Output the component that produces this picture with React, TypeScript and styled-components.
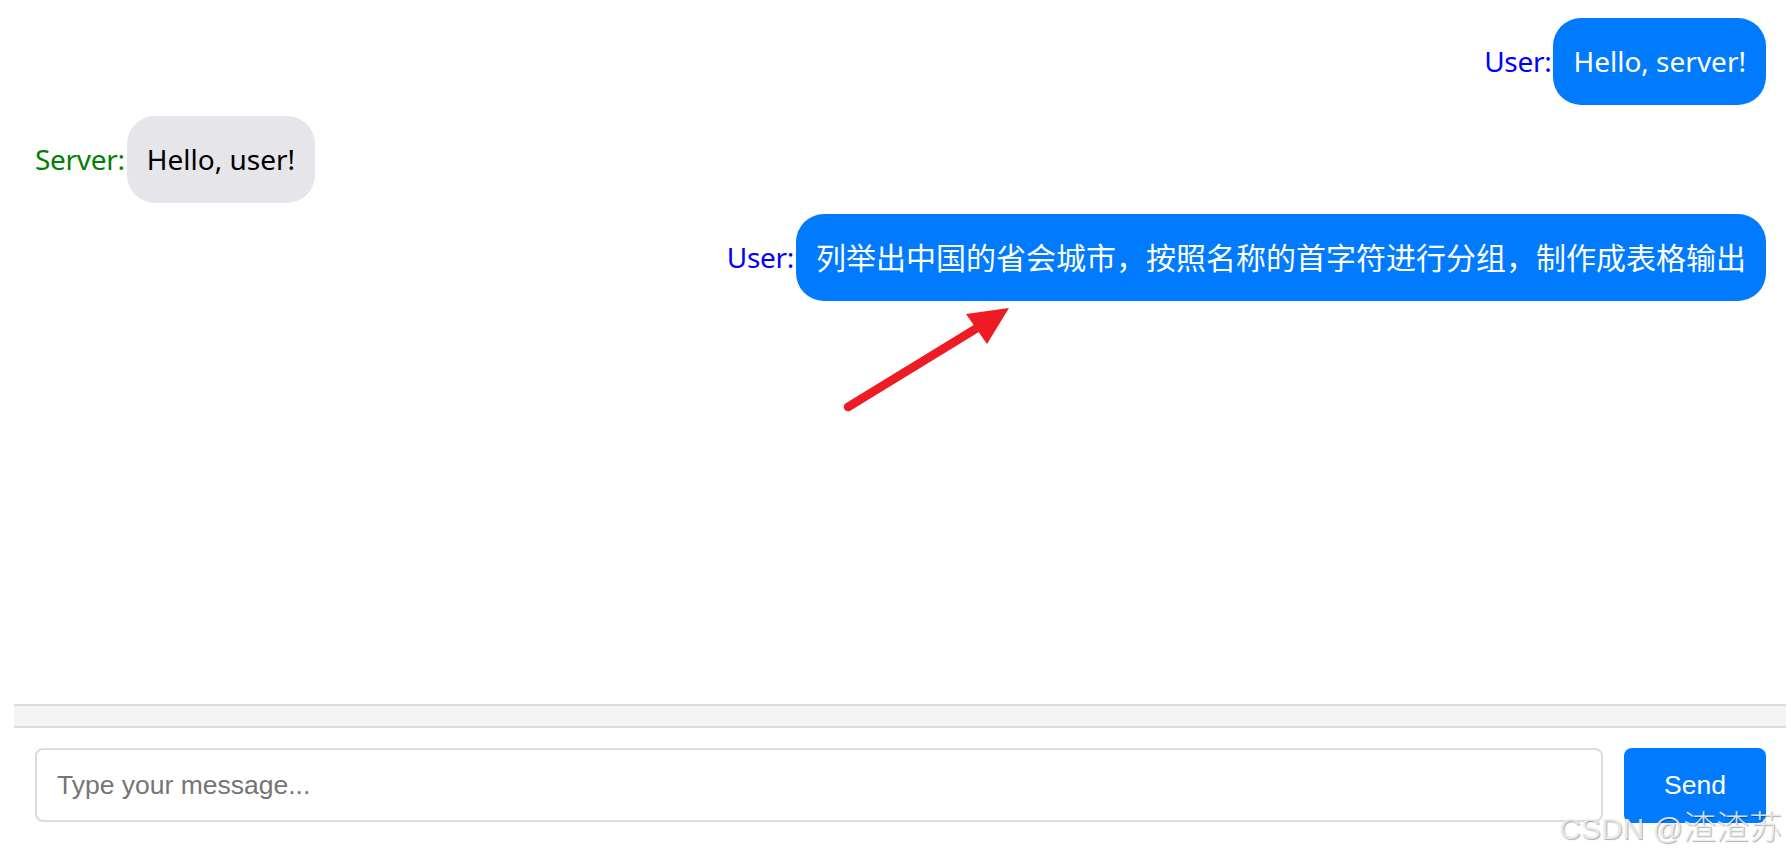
import * as React from "react";
import styled, {createGlobalStyle} from "styled-components";

interface IMessage {
    id: number,
    sender: "user" | "server",
    lang: string,
    text: string
}

const messages: Array<IMessage> = [
    {id: 1, sender: "user", lang: "en", text: "Hello, server!"},
    {id: 2, sender: "server", lang: "en", text: "Hello, user!"},
    {id: 3, sender: "user", lang: "zh", text: "列举出中国的省会城市，按照名称的首字符进行分组，制作成表格输出"},
];

const GlobalStyle = createGlobalStyle`
    html, body {
        margin: 0;
        padding: 0;
        background: #ffffff;
    }

    body {
        font-family: "Noto Sans", "Noto Sans CJK SC", sans-serif;
    }
`;

const Page = styled.div`
    position: relative;
    height: 860px;
    padding: 0 5px 0 14px;
    box-sizing: border-box;
    display: flex;
    flex-direction: column;
    overflow: hidden;
`;

const MessageList = styled.div`
    flex: none;
    height: 704px;
    box-sizing: border-box;
    padding: 18px 20px 0 21px;
    display: flex;
    flex-direction: column;
    gap: 11px;
`;

const Row = styled.div<{ $mine: boolean }>`
    display: flex;
    align-items: center;
    justify-content: ${props => props.$mine ? "flex-end" : "flex-start"};
`;

const Label = styled.span<{ $mine: boolean }>`
    font-size: 28px;
    line-height: 39px;
    margin-right: 2px;
    letter-spacing: -0.3px;
    color: ${props => props.$mine ? "#0000ff" : "#008000"};
`;

const Bubble = styled.div<{ $mine: boolean }>`
    padding: 24px 20px;
    font-size: 28px;
    line-height: 39px;
    border-radius: 28px;
    white-space: nowrap;
    background: ${props => props.$mine ? "#007bff" : "#e5e5ea"};
    color: ${props => props.$mine ? "#ffffff" : "#000000"};

    /* han glyphs run a touch larger than the latin ones */
    &:lang(zh) {
        font-size: 30px;
    }
`;

const Divider = styled.div`
    flex: none;
    height: 24px;
    box-sizing: border-box;
    border-top: 2px solid #dcdcdc;
    border-bottom: 2px solid #dcdcdc;
    background: #f4f4f4;
`;

const Composer = styled.div`
    display: flex;
    gap: 21px;
    padding: 20px 20px 0 21px;
`;

const MessageInput = styled.input`
    flex: 1;
    height: 74px;
    box-sizing: border-box;
    padding: 0 20px;
    border: 2px solid #dcdcdc;
    border-radius: 8px;
    font-family: "Liberation Sans", Arial, sans-serif;
    font-size: 26.5px;
    color: #222222;
    outline: none;

    &::placeholder {
        color: #757575;
    }
`;

const SendButton = styled.button`
    width: 142px;
    height: 75px;
    border: none;
    border-radius: 8px;
    background: #007bff;
    color: #ffffff;
    font-family: "Liberation Sans", Arial, sans-serif;
    font-size: 26.5px;
    cursor: pointer;
`;

const Watermark = styled.div`
    position: absolute;
    right: 9px;
    bottom: 14px;
    font-family: "Liberation Sans", "Noto Sans CJK SC", sans-serif;
    font-size: 30px;
    line-height: 34px;
    color: rgba(236, 236, 236, 0.92);
    text-shadow: 1px 1px 1px rgba(0, 0, 0, 0.32);
    pointer-events: none;

    span {
        font-size: 33px;
        font-weight: 300;
    }
`;

const Pointer = styled.svg`
    position: absolute;
    left: 830px;
    top: 295px;
    width: 190px;
    height: 125px;
    pointer-events: none;
`;

function MessageRow(props: { message: IMessage }) {
    const mine = props.message.sender === "user";
    return (
        <Row $mine={mine}>
            <Label $mine={mine}>{mine ? "User:" : "Server:"}</Label>
            <Bubble $mine={mine} lang={props.message.lang}>{props.message.text}</Bubble>
        </Row>
    );
}

export default function App() {
    return (
        <>
            <GlobalStyle/>
            <Page>
                <MessageList>
                    {messages.map(m => <MessageRow key={m.id} message={m}/>)}
                </MessageList>
                <Divider/>
                <Composer>
                    <MessageInput type="text" placeholder="Type your message..."/>
                    <SendButton>Send</SendButton>
                </Composer>

                {/* red call-out arrow */}
                <Pointer viewBox="830 295 190 125">
                    <line x1="848" y1="407" x2="982" y2="325"
                          stroke="#ed1c24" strokeWidth="8.5" strokeLinecap="round"/>
                    <polygon points="1009,308 966,314 987,344" fill="#ed1c24"/>
                </Pointer>

                <Watermark>CSDN @<span>渣渣苏</span></Watermark>
            </Page>
        </>
    );
}
